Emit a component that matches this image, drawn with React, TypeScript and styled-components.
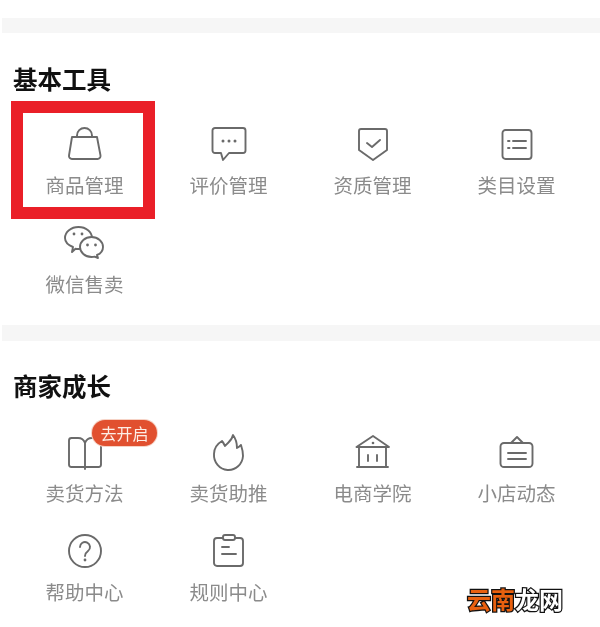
import React from "react";
import styled, { createGlobalStyle } from "styled-components";

const GlobalStyle = createGlobalStyle`
  html, body {
    margin: 0;
    background: #fff;
    font-family: "Liberation Sans", "Noto Sans CJK SC", sans-serif;
  }
`;
const Page = styled.div`
  position: relative;
  width: 600px;
  height: 627px;
  overflow: hidden;
  padding-top: 18px;
  box-sizing: border-box;
  background: #fff;
  filter: blur(0.35px);
`;
const Band = styled.div<{ $height: number }>`
  height: ${(p) => p.$height}px;
  margin-left: 2px;
  background: #f6f6f6;
`;
const Section = styled.section<{ $top: number; $bottom: number }>`
  display: flex;
  flex-direction: column;
  gap: ${(p) => 61 - p.$top}px;
  padding: ${(p) => p.$top}px 0 ${(p) => p.$bottom}px 13px;
`;
const Title = styled.h2`
  margin: 0;
  height: 32px;
  font-size: 24.5px;
  line-height: 32px;
  font-weight: 700;
  color: #111;
  font-family: "Noto Sans CJK SC", sans-serif;
`;
const Grid = styled.div`
  display: grid;
  grid-template-columns: repeat(4, 144px);
  row-gap: 28px;
`;
const Item = styled.div`
  position: relative;
  display: flex;
  flex-direction: column;
  align-items: center;
  gap: 11px;
`;
const Icon = styled.svg`
  width: 36px;
  height: 36px;
  overflow: visible;
  fill: none;
  stroke: #6a6a6a;
  stroke-width: 1.9;
  stroke-linejoin: round;
  stroke-linecap: round;
`;
const Dot = styled.circle`
  fill: #6a6a6a;
  stroke: none;
`;
const Label = styled.span`
  height: 24px;
  padding-right: 1px;
  font-size: 19.5px;
  line-height: 24px;
  color: #8b8b8b;
  white-space: nowrap;
  font-family: "Noto Sans CJK SC", sans-serif;
`;
const Badge = styled.span`
  position: absolute;
  top: -14px;
  right: 0;
  width: 65px;
  height: 26px;
  border-radius: 13px;
  background: #e1502f;
  box-shadow: 0 0 0 1px #f6d3c6;
  color: #fdeee6;
  font-size: 16px;
  line-height: 26px;
  text-align: center;
  font-family: "Noto Sans CJK SC", sans-serif;
`;
const Highlight = styled.div`
  position: absolute;
  left: 11px;
  top: 101px;
  width: 144px;
  height: 118px;
  box-sizing: border-box;
  border: 12px solid #ea1f28;
`;
const Watermark = styled.div`
  position: absolute;
  left: 467px;
  top: 583px;
  font-size: 24px;
  line-height: 32px;
  font-weight: 700;
  color: #fff;
  white-space: nowrap;
  -webkit-text-stroke: 2.5px #111;
  paint-order: stroke fill;
  font-family: "Noto Sans CJK SC", sans-serif;
`;
const Orange = styled.span`
  color: #e8600f;
`;

const icons: Record<string, React.ReactNode> = {
  bag: (
    <>
      <path d="M5 11h25l3.500 18.500a3 3 0 0 1-3 3.500H5a3 3 0 0 1-3-3.500z" />
      <path d="M10 11V9.500a7.500 7.500 0 0 1 15 0V11" />
    </>
  ),
  chat: (
    <>
      <path d="M4 2h28a2.500 2.500 0 0 1 2.500 2.500v20a2.500 2.500 0 0 1-2.500 2.500H18l-6 7-2-7H4a2.500 2.500 0 0 1-2.500-2.500v-20A2.500 2.500 0 0 1 4 2z" />
      <Dot cx="12" cy="15" r="1.500" />
      <Dot cx="18" cy="15" r="1.500" />
      <Dot cx="24" cy="15" r="1.500" />
    </>
  ),
  shield: (
    <>
      <path d="M6 3h24a2 2 0 0 1 2 2v19L18 34 4 24V5a2 2 0 0 1 2-2z" />
      <path d="M12 17l5 4 8-7" />
    </>
  ),
  list: (
    <>
      <rect x="3.500" y="4" width="29" height="29" rx="3" />
      <path d="M9 15h1.500M14 15h13M9 22h1.500M14 22h13" />
    </>
  ),
  wechat: (
    <>
      <path d="M5 27l1-5C1 20-2 17-2 13-2 7 4 2 11.500 2S25 7 25 13s-6 11-13.500 11c-1 0-2 0-3-.2z" />
      <path
        d="M31 33l-1-3c4-1.500 6-4.500 6-8 0-5.500-5-10-11.500-10S13 16.500 13 22s5 10 11.500 10c1 0 2 0 3-.3z"
        fill="#fff"
      />
      <Dot cx="7" cy="9" r="1.400" />
      <Dot cx="15" cy="9" r="1.400" />
      <Dot cx="20.500" cy="20" r="1.400" />
      <Dot cx="28.500" cy="20" r="1.400" />
    </>
  ),
  book: (
    <path d="M18 35V9c-1-3-4-5-7-5H4.500A2.500 2.500 0 0 0 2 6.500v24A2.500 2.500 0 0 0 4.500 33h27a2.500 2.500 0 0 0 2.500-2.500v-24A2.500 2.500 0 0 0 31.500 4H25c-3 0-6 2-7 5" />
  ),
  flame: (
    <path d="M22 1c-1 6-5 7-8 11-1-2-2-4-3-5-5 3-8 8-8 13a14.500 15 0 0 0 29 2c0-4-1-8-2-11-1 1-2 2-4 3 0-5-1-9-4-13z" />
  ),
  school: (
    <>
      <path d="M1.500 13L18 2l16 11z" />
      <path d="M4 13v20M31 13v20M2 33h31M13 21v6M22 21v6" />
      <Dot cx="18" cy="9" r="1.300" />
    </>
  ),
  sign: (
    <>
      <rect x="1.500" y="9" width="32" height="24" rx="3.500" />
      <path d="M12 9l6-6 6 6M9 19h18M9 25h18" />
    </>
  ),
  help: (
    <>
      <circle cx="18" cy="18" r="16" />
      <path d="M13 14a5 5 0 1 1 8 4c-2 1.500-3 2.500-3 5" />
      <Dot cx="18" cy="27" r="1.400" />
    </>
  ),
  rules: (
    <>
      <rect x="3" y="5" width="29" height="28" rx="3" />
      <rect x="12" y="2" width="12" height="5" rx="2" fill="#fff" />
      <path d="M11 14h7M11 21h14" />
    </>
  ),
};

type Tool = { icon: string; label: string; badge?: string };

const basicTools: Tool[] = [
  { icon: "bag", label: "商品管理" },
  { icon: "chat", label: "评价管理" },
  { icon: "shield", label: "资质管理" },
  { icon: "list", label: "类目设置" },
  { icon: "wechat", label: "微信售卖" },
];

const growthTools: Tool[] = [
  { icon: "book", label: "卖货方法", badge: "去开启" },
  { icon: "flame", label: "卖货助推" },
  { icon: "school", label: "电商学院" },
  { icon: "sign", label: "小店动态" },
  { icon: "help", label: "帮助中心" },
  { icon: "rules", label: "规则中心" },
];

const ToolGrid = ({ tools }: { tools: Tool[] }) => (
  <Grid>
    {tools.map((tool) => (
      <Item key={tool.label}>
        <Icon viewBox="0 0 36 36">{icons[tool.icon]}</Icon>
        <Label>{tool.label}</Label>
        {tool.badge && <Badge>{tool.badge}</Badge>}
      </Item>
    ))}
  </Grid>
);

const App = () => {
  return (
    <Page>
      <GlobalStyle />
      <Band $height={15} />
      <Section $top={30} $bottom={29}>
        <Title>基本工具</Title>
        <ToolGrid tools={basicTools} />
      </Section>
      <Band $height={16} />
      <Section $top={29} $bottom={0}>
        <Title>商家成长</Title>
        <ToolGrid tools={growthTools} />
      </Section>
      <Highlight />
      <Watermark>
        <Orange>云南</Orange>龙网
      </Watermark>
    </Page>
  );
};

export default App;
